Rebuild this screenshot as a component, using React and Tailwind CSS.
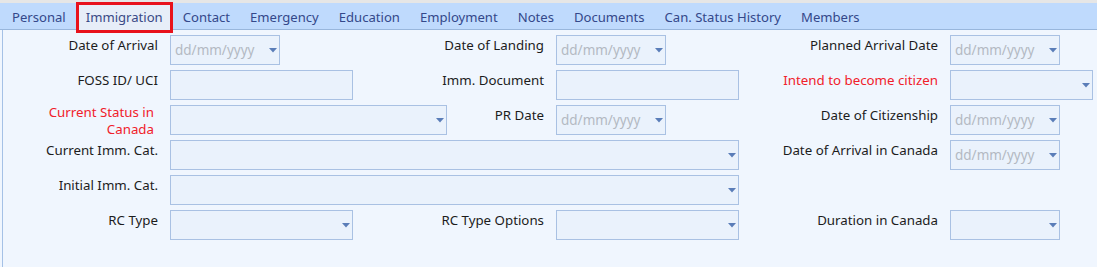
import React from 'react';

const tabs = ['Personal', 'Immigration', 'Contact', 'Emergency', 'Education', 'Employment', 'Notes', 'Documents', 'Can. Status History', 'Members'];

const Arrow = () => (
    <svg width="8" height="5" viewBox="0 0 8 5" className="shrink-0">
        <path d="M0 0 H8 L4 4.5 Z" fill="#5a7db8" />
    </svg>
);

const Label = ({ children, red, className = '' }) => (
    <div className={`pr-[12px] pt-[2px] text-right text-[13.3px] leading-[17px] ${red ? 'text-[#f0202a]' : 'text-[#1c1c1c]'} ${className}`}>
        {children}
    </div>
);

const Box = ({ w, children }) => (
    <div
        className={`h-[30px] border border-[#a9c1e3] bg-[#eaf2fc] flex items-center pl-[4px] pr-[2px] ${w}`}
    >
        {children}
    </div>
);

const DateBox = () => (
    <Box w="w-[110px]">
        <span className="flex-1 text-[13.5px] text-[#b3b9c2]">dd/mm/yyyy</span>
        <Arrow />
    </Box>
);

const SelectBox = ({ w }) => (
    <Box w={w}>
        <span className="flex-1" />
        <Arrow />
    </Box>
);

const TextBox = ({ w }) => <Box w={w} />;

export default function App() {
    return (
        <div className="w-[1097px] h-[267px] bg-[#f0f6fe] font-['Noto_Sans',sans-serif] overflow-hidden">
            <div className="h-[3px] bg-[#e6e6e6]" />
            <div className="h-[27px] bg-[#bfdafd] border-b border-[#98b6dc] flex items-start pl-[2px]">
                {tabs.map((t) => (
                    <div
                        key={t}
                        className={
                            t === 'Immigration'
                                ? 'relative h-[31px] -mt-[1px] border-[3px] border-[#e8121c] bg-[#e7eef8] px-[7px] pt-[3px] text-[13.1px] text-[#3a4a86]'
                                : 'px-[10px] pt-[5px] text-[13.1px] text-[#34488a]'
                        }
                    >
                        {t}
                    </div>
                ))}
            </div>
            <div className="h-[237px] border-l border-[#a5c1e6] ml-[2px] pt-[5px]">
                <div className="grid grid-cols-[167px_183px_203px_183px_211px_1fr] auto-rows-[30px] gap-y-[5px]">
                    <Label>Date of Arrival</Label>
                    <div><DateBox /></div>
                    <Label>Date of Landing</Label>
                    <div><DateBox /></div>
                    <Label>Planned Arrival Date</Label>
                    <div><DateBox /></div>

                    <Label>FOSS ID/ UCI</Label>
                    <div><TextBox w="w-[183px]" /></div>
                    <Label>Imm. Document</Label>
                    <div><TextBox w="w-[183px]" /></div>
                    <Label red>Intend to become citizen</Label>
                    <div><SelectBox w="w-[143px]" /></div>

                    <Label red className="!pt-0 -mt-[1px] pr-[16px]">Current Status in<br />Canada</Label>
                    <div className="col-span-2 flex">
                        <SelectBox w="w-[277px]" />
                        <Label className="flex-1">PR Date</Label>
                    </div>
                    <div><DateBox /></div>
                    <Label>Date of Citizenship</Label>
                    <div><DateBox /></div>

                    <Label>Current Imm. Cat.</Label>
                    <div className="col-span-3"><SelectBox w="w-[569px]" /></div>
                    <Label>Date of Arrival in Canada</Label>
                    <div><DateBox /></div>

                    <Label>Initial Imm. Cat.</Label>
                    <div className="col-span-3"><SelectBox w="w-[569px]" /></div>
                    <div className="col-span-2" />

                    <Label>RC Type</Label>
                    <div><SelectBox w="w-[183px]" /></div>
                    <Label>RC Type Options</Label>
                    <div><SelectBox w="w-[183px]" /></div>
                    <Label>Duration in Canada</Label>
                    <div><SelectBox w="w-[110px]" /></div>
                </div>
            </div>
        </div>
    );
}
